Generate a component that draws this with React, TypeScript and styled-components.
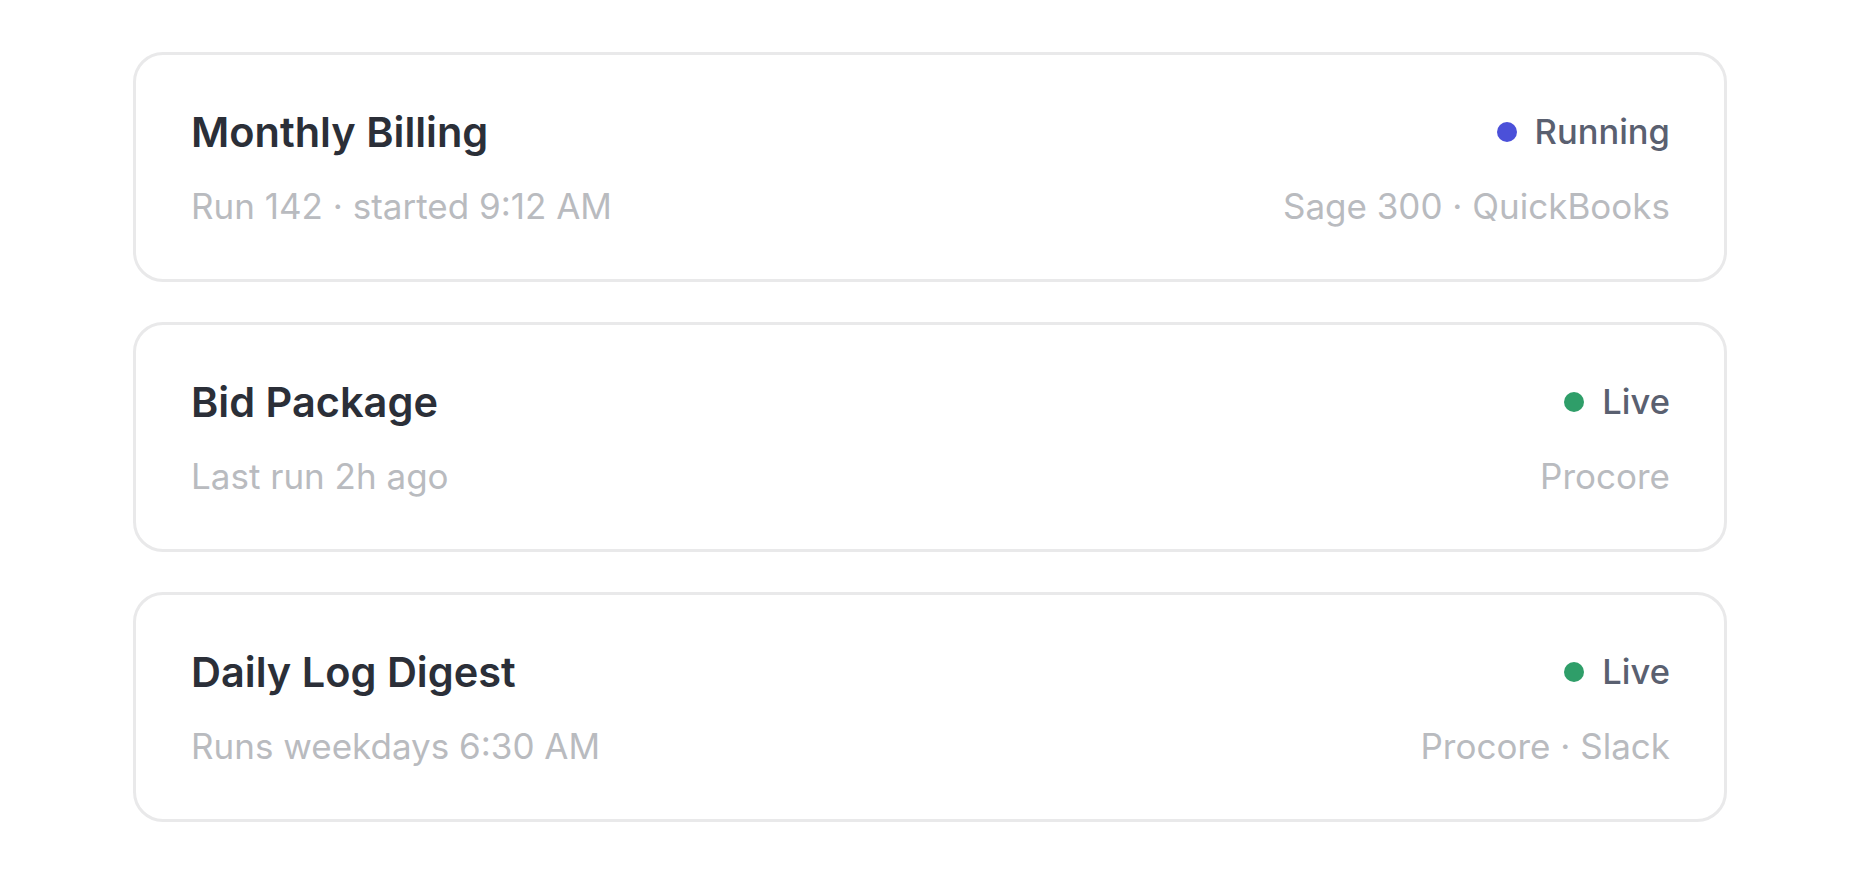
import React from 'react';
import styled, { createGlobalStyle } from 'styled-components';

const GlobalStyle = createGlobalStyle`
  body {
    margin: 0;
    background: #ffffff;
    font-family: Inter, "Liberation Sans", sans-serif;
  }
`;

const Page = styled.main`
  display: grid;
  gap: 40px;
  padding: 52px 133px;
`;

const Card = styled.section`
  box-sizing: border-box;
  height: 230px;
  display: grid;
  align-content: center;
  gap: 28px;
  padding: 0 54px 0 55px;
  border: 3px solid #e9e9ea;
  border-radius: 30px;
  background: #ffffff;
`;

const Row = styled.div`
  display: flex;
  align-items: center;
  justify-content: space-between;
`;

const Title = styled.h2`
  margin: 0;
  font-size: 41.5px;
  line-height: 50px;
  font-weight: 600;
  color: #2b2f38;
`;

const Status = styled.div`
  display: flex;
  align-items: center;
  gap: 18px;
  font-size: 34.5px;
  line-height: 42px;
  font-weight: 500;
  color: #5a6070;
`;

const Dot = styled.span<{ $color: string }>`
  width: 20px;
  height: 20px;
  border-radius: 50%;
  background: ${({ $color }) => $color};
`;

const Meta = styled.span`
  font-size: 35px;
  line-height: 42px;
  font-weight: 400;
  color: #b9bbbf;
`;

type Flow = {
  name: string;
  status: 'Running' | 'Live';
  detail: string;
  systems: string;
};

const statusColor: Record<Flow['status'], string> = {
  Running: '#4b50d9',
  Live: '#2f9e69',
};

const flows: Flow[] = [
  { name: 'Monthly Billing', status: 'Running', detail: 'Run 142 · started 9:12 AM', systems: 'Sage 300 · QuickBooks' },
  { name: 'Bid Package', status: 'Live', detail: 'Last run 2h ago', systems: 'Procore' },
  { name: 'Daily Log Digest', status: 'Live', detail: 'Runs weekdays 6:30 AM', systems: 'Procore · Slack' },
];

export default function App() {
  return (
    <>
      <GlobalStyle />
      <Page>
        {flows.map((f) => (
          <Card key={f.name}>
            <Row>
              <Title>{f.name}</Title>
              <Status>
                <Dot $color={statusColor[f.status]} />
                {f.status}
              </Status>
            </Row>
            <Row>
              <Meta>{f.detail}</Meta>
              <Meta>{f.systems}</Meta>
            </Row>
          </Card>
        ))}
      </Page>
    </>
  );
}
